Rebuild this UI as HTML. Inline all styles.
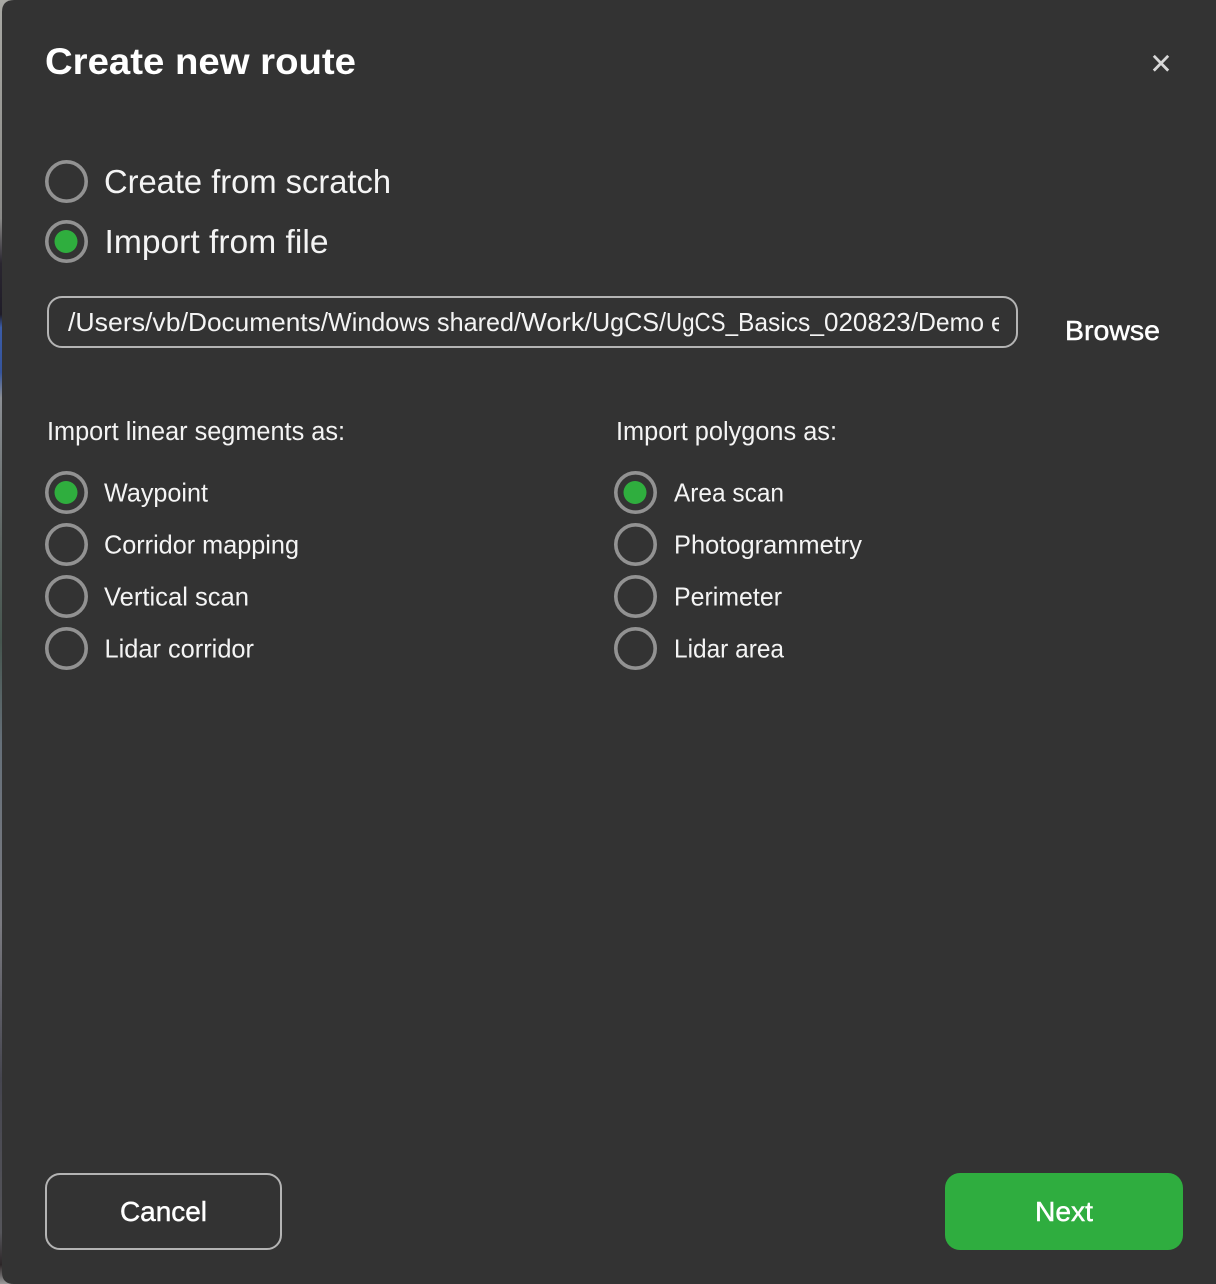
<!DOCTYPE html>
<html lang="en">
<head>
<meta charset="utf-8">
<title>Create new route</title>
<style>
html,body{margin:0;padding:0;width:1216px;height:1284px;overflow:hidden;background:#333;}
svg{display:block;position:absolute;left:0;top:0;}
text{font-family:"Liberation Sans",sans-serif;fill:#f4f4f4;}
.m{stroke:#fff;stroke-width:.45px;fill:#fff;}
.r{fill:none;stroke:#929292;stroke-width:3.6;}
.d{fill:#2fae3e;}
</style>
</head>
<body>
<svg width="1216" height="1284" viewBox="0 0 1216 1284" xmlns="http://www.w3.org/2000/svg">
<defs>
<linearGradient id="edge" x1="0" y1="0" x2="0" y2="1">
<stop offset="0" stop-color="#a9a9a4"/>
<stop offset=".17" stop-color="#8a8a88"/>
<stop offset=".205" stop-color="#2a2630"/>
<stop offset=".245" stop-color="#1f1c28"/>
<stop offset=".255" stop-color="#3b5ca8"/>
<stop offset=".29" stop-color="#35549c"/>
<stop offset=".31" stop-color="#8c8f94"/>
<stop offset=".42" stop-color="#5e6664"/>
<stop offset=".5" stop-color="#46564f"/>
<stop offset=".58" stop-color="#66707a"/>
<stop offset=".72" stop-color="#7a7a80"/>
<stop offset=".84" stop-color="#45454f"/>
<stop offset=".96" stop-color="#55555a"/>
<stop offset=".985" stop-color="#2c2628"/>
<stop offset="1" stop-color="#9a9a9a"/>
</linearGradient>
<clipPath id="c"><rect x="60" y="300" width="939" height="44"/></clipPath>
</defs>

<rect width="1216" height="1284" fill="url(#edge)"/>
<path d="M14 0H1216V1284H14Q2 1284 2 1272V12Q2 0 14 0Z" fill="#333"/>

<text class="m" x="45" y="74" font-size="37" font-weight="700" textLength="311" lengthAdjust="spacingAndGlyphs" style="stroke-width:0">Create new route</text>

<path d="M1153.8 55.8L1168.2 70.6M1168.2 55.8L1153.8 70.6" stroke="#d8d8d8" stroke-width="2.8" fill="none"/>

<circle class="r" cx="66.5" cy="181.5" r="19.7"/>
<text x="104" y="193" font-size="33" textLength="287" lengthAdjust="spacingAndGlyphs">Create from scratch</text>
<circle class="r" cx="66.5" cy="241.5" r="19.7"/>
<circle class="d" cx="66" cy="241.5" r="11.5"/>
<text x="104.5" y="253" font-size="33" textLength="224" lengthAdjust="spacingAndGlyphs">Import from file</text>

<rect x="48" y="297" width="969" height="50" rx="14" ry="14" fill="none" stroke="#b4b4b4" stroke-width="2"/>
<g clip-path="url(#c)" font-size="26">
<text x="68" y="331" textLength="120" lengthAdjust="spacingAndGlyphs">/Users/vb/</text>
<text x="188" y="331" textLength="140" lengthAdjust="spacingAndGlyphs">Documents/</text>
<text x="328" y="331" textLength="102" lengthAdjust="spacingAndGlyphs">Windows</text>
<text x="437" y="331" textLength="84" lengthAdjust="spacingAndGlyphs">shared/</text>
<text x="521" y="331" textLength="71" lengthAdjust="spacingAndGlyphs">Work/</text>
<text x="592" y="331" textLength="74" lengthAdjust="spacingAndGlyphs">UgCS/</text>
<text x="666" y="331" textLength="72" lengthAdjust="spacingAndGlyphs">UgCS_</text>
<text x="738" y="331" textLength="86" lengthAdjust="spacingAndGlyphs">Basics_</text>
<text x="824" y="331" textLength="94" lengthAdjust="spacingAndGlyphs">020823/</text>
<text x="918" y="331" textLength="66" lengthAdjust="spacingAndGlyphs">Demo</text>
<text x="991" y="331" textLength="14" lengthAdjust="spacingAndGlyphs">e</text>
</g>
<text class="m" x="1065" y="340" font-size="28" textLength="95" lengthAdjust="spacingAndGlyphs">Browse</text>

<text x="47" y="440" font-size="25.5" textLength="298" lengthAdjust="spacingAndGlyphs">Import linear segments as:</text>
<text x="616" y="440" font-size="25.5" textLength="221" lengthAdjust="spacingAndGlyphs">Import polygons as:</text>

<circle class="r" cx="66.5" cy="492.5" r="19.7"/>
<circle class="d" cx="66" cy="492.5" r="11.5"/>
<text x="104" y="501.5" font-size="26" textLength="104" lengthAdjust="spacingAndGlyphs">Waypoint</text>
<circle class="r" cx="66.5" cy="544.5" r="19.7"/>
<text x="104" y="553.5" font-size="26" textLength="195" lengthAdjust="spacingAndGlyphs">Corridor mapping</text>
<circle class="r" cx="66.5" cy="596.5" r="19.7"/>
<text x="104" y="605.5" font-size="26" textLength="145" lengthAdjust="spacingAndGlyphs">Vertical scan</text>
<circle class="r" cx="66.5" cy="648.5" r="19.7"/>
<text x="104.5" y="657.5" font-size="26" textLength="149.5" lengthAdjust="spacingAndGlyphs">Lidar corridor</text>

<circle class="r" cx="635.5" cy="492.5" r="19.7"/>
<circle class="d" cx="635" cy="492.5" r="11.5"/>
<text x="674" y="501.5" font-size="26" textLength="110" lengthAdjust="spacingAndGlyphs">Area scan</text>
<circle class="r" cx="635.5" cy="544.5" r="19.7"/>
<text x="674" y="553.5" font-size="26" textLength="188" lengthAdjust="spacingAndGlyphs">Photogrammetry</text>
<circle class="r" cx="635.5" cy="596.5" r="19.7"/>
<text x="674" y="605.5" font-size="26" textLength="108" lengthAdjust="spacingAndGlyphs">Perimeter</text>
<circle class="r" cx="635.5" cy="648.5" r="19.7"/>
<text x="674" y="657.5" font-size="26" textLength="110" lengthAdjust="spacingAndGlyphs">Lidar area</text>

<rect x="46" y="1174" width="235" height="75" rx="14" ry="14" fill="none" stroke="#b4b4b4" stroke-width="2"/>
<text class="m" x="120" y="1221" font-size="28" textLength="87" lengthAdjust="spacingAndGlyphs">Cancel</text>
<rect x="945" y="1173" width="238" height="77" rx="15" ry="15" fill="#2fad3f"/>
<text class="m" x="1035" y="1221" font-size="28" textLength="58" lengthAdjust="spacingAndGlyphs">Next</text>
</svg>
</body>
</html>
